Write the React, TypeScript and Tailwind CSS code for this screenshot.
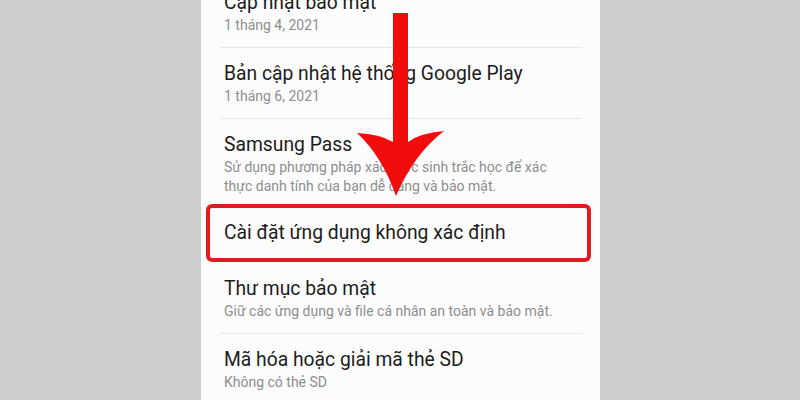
import React from "react";

interface Item {
  title: string;
  lines: string[];
  divider: boolean;
}

const before: Item[] = [
  { title: "Cập nhật bảo mật", lines: ["1 tháng 4, 2021"], divider: true },
  { title: "Bản cập nhật hệ thống Google Play", lines: ["1 tháng 6, 2021"], divider: true },
  {
    title: "Samsung Pass",
    lines: [
      "Sử dụng phương pháp xác thực sinh trắc học để xác",
      "thực danh tính của bạn dễ dàng và bảo mật.",
    ],
    divider: false,
  },
];

const after: Item[] = [
  {
    title: "Thư mục bảo mật",
    lines: ["Giữ các ứng dụng và file cá nhân an toàn và bảo mật."],
    divider: true,
  },
  { title: "Mã hóa hoặc giải mã thẻ SD", lines: ["Không có thẻ SD"], divider: false },
];

const Row = ({ item, last }: { item: Item; last?: boolean }) => (
  <div
    className={
      "ml-[19px] mr-[18px] pl-[4px] pt-[13px] " +
      (last ? "pb-[8px] " : "pb-[12px] ") +
      (item.divider ? "border-b border-[#e8e8e8]" : "")
    }
  >
    <div className="text-[19.3px] leading-[26px] text-[#1c1c1c]">{item.title}</div>
    {item.lines.map((l) => (
      <div key={l} className="text-[14px] leading-[19px] text-[#8e8e8e]">
        {l}
      </div>
    ))}
  </div>
);

const Arrow = () => (
  <svg
    className="absolute left-0 top-0"
    width="399"
    height="400"
    viewBox="201 0 399 400"
  >
    <path
      d="M393 13 L408 13 L408 142 Q420 133 444 131 Q414 154 396 196 Q382 156 357 133 Q380 134 393 142 Z"
      fill="#f20d0d"
    />
  </svg>
);

export default function App() {
  return (
    <div
      className="w-[800px] h-[400px] bg-[#cdcdcd] flex pl-[201px] overflow-hidden"
      style={{ fontFamily: "Roboto, 'Noto Sans', sans-serif" }}
    >
      <div className="relative w-[399px] h-[400px] bg-[#fcfcfc] overflow-hidden">
        <div className="-mt-[23px]">
          {before.map((it, i) => (
            <Row key={it.title} item={it} last={i === before.length - 1} />
          ))}
          <div className="ml-[5px] mr-[9px] h-[58px] border-4 border-[#e01b22] rounded-[6px] flex items-center pl-[14px]">
            <span className="text-[19.3px] text-[#1c1c1c]">Cài đặt ứng dụng không xác định</span>
          </div>
          <div className="pt-[1px]">
            {after.map((it, i) => (
              <Row key={it.title} item={it} last={i === after.length - 1} />
            ))}
          </div>
        </div>
        <Arrow />
      </div>
    </div>
  );
}
